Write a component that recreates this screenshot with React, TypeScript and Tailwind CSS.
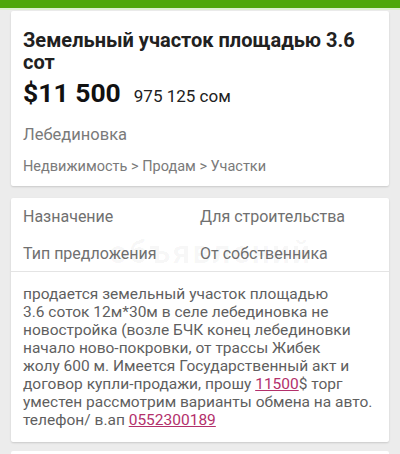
export default function App() {
  return (
    <div className="relative h-[454px] w-[400px] overflow-hidden bg-[#ececec] font-['Roboto',sans-serif]">
      <div className="h-2 bg-[#4ea70a]" />
      <div className="h-[2px] bg-[#dcefd0]" />

      <div className="mx-[11px] mt-px rounded-[2px] bg-white px-3 pb-[10px] pt-[18px] shadow-[0_1px_2px_rgba(0,0,0,0.15)]">
        <h1 className="text-[20px] font-bold leading-[22px] text-[#212121]">
          Земельный участок площадью 3.6 сот
        </h1>
        <div className="mt-1 flex items-baseline gap-[13px]">
          <span className="text-[26.5px] font-bold leading-8 text-[#111]">$11 500</span>
          <span className="text-[17px] text-[#212121]">975 125 сом</span>
        </div>
        <div className="mt-[15px] text-[16.5px] leading-5 text-[#7a7a7a]">Лебединовка</div>
        <div className="mt-[13px] text-[14.5px] leading-[18px] text-[#7a7a7a]">
          Недвижимость &gt; Продам &gt; Участки
        </div>
      </div>

      <div className="relative mx-[11px] mt-3 rounded-[2px] bg-white shadow-[0_1px_2px_rgba(0,0,0,0.15)]">
        <div aria-hidden className="pointer-events-none absolute left-[98px] top-[30px] select-none text-[32px] font-bold tracking-[2px] text-black/[0.035]">
          объявлений
        </div>
        <div className="grid grid-cols-[177px_1fr] gap-y-[17px] px-3 pb-[7px] pt-[9px] text-[16px] leading-5 text-[#707070]">
          <span>Назначение</span>
          <span>Для строительства</span>
          <span>Тип предложения</span>
          <span>От собственника</span>
        </div>
        <div className="border-t border-[#e4e4e4] px-3 pb-[13px] pt-[13px] text-[15.5px] leading-[18px] text-[#5f5f5f]">
          продается земельный участок площадью
          <br />
          3.6 соток 12м*30м в селе лебединовка не
          <br />
          новостройка (возле БЧК конец лебединовки
          <br />
          начало ново-покровки, от трассы Жибек
          <br />
          жолу 600 м. Имеется Государственный акт и
          <br />
          договор купли-продажи, прошу{" "}
          <a className="text-[#b3306b] underline">11500</a>$ торг
          <br />
          уместен рассмотрим варианты обмена на авто.
          <br />
          телефон/ в.ап <a className="text-[#b3306b] underline">0552300189</a>
        </div>
      </div>

      <div className="mx-[11px] mt-[9px] h-10 rounded-[2px] bg-white" />
    </div>
  );
}
